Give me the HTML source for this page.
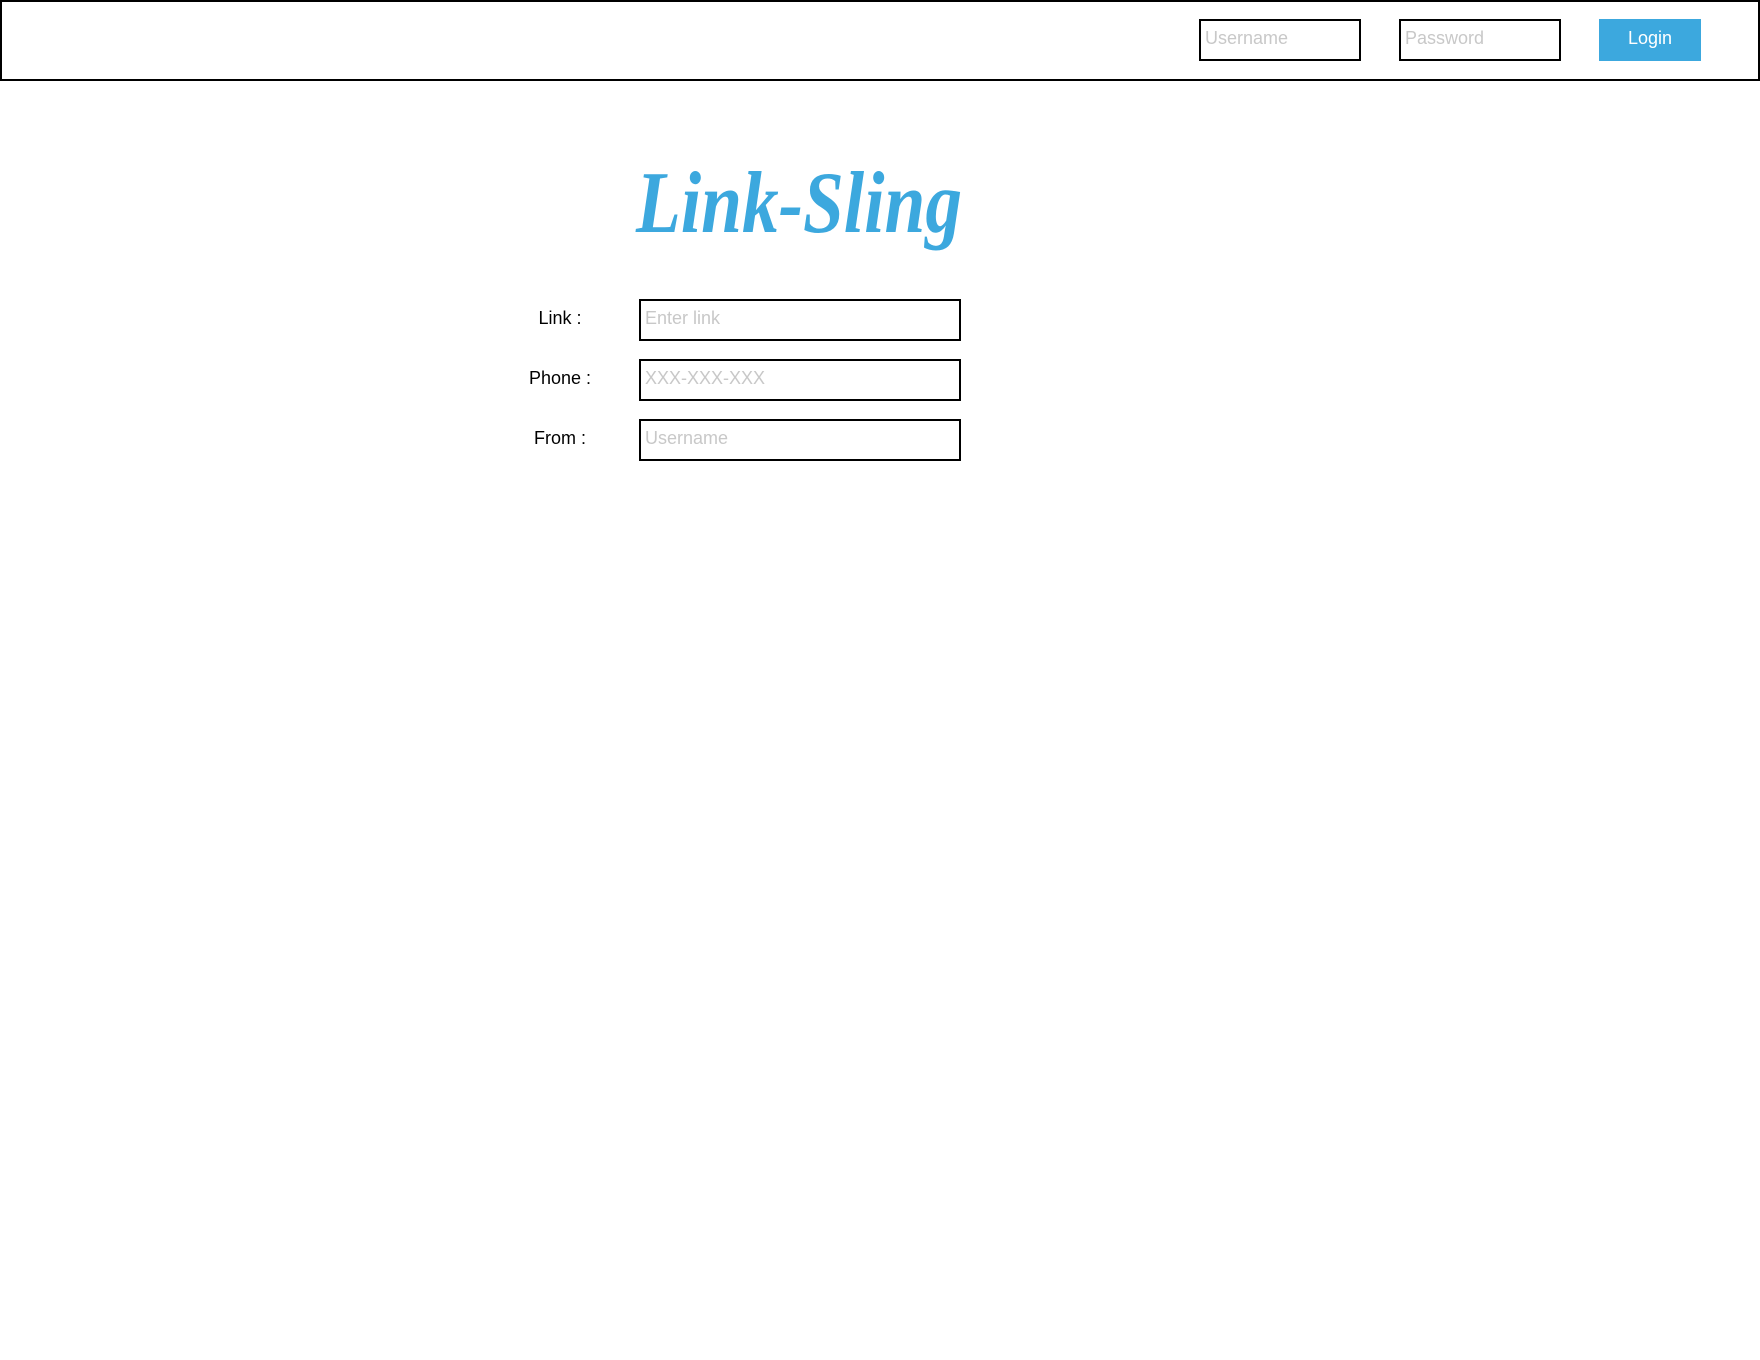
<!DOCTYPE html>
<html><head><meta charset="utf-8"><style>
*{box-sizing:border-box;margin:0;padding:0}
body{width:1760px;height:1360px;background:#fff;position:relative;font-family:"Liberation Sans",sans-serif;overflow:hidden}
.hdr{position:absolute;left:0;top:0;width:1760px;height:81px;border:2px solid #000}
.box{position:absolute;border:2px solid #000;background:#fff;color:#c8c8c8;font-size:18px;padding-left:4px;display:flex;align-items:center;padding-bottom:4px}
.btn{position:absolute;left:1599px;top:19px;width:102px;height:42px;background:#3ca8de;color:#fff;font-size:18px;display:flex;align-items:center;justify-content:center;padding-bottom:3px}
.lbl{position:absolute;width:120px;text-align:center;font-size:18px;color:#000}
</style></head><body>
<div class="hdr"></div>
<div class="box" style="left:1199px;top:19px;width:162px;height:42px">Username</div>
<div class="box" style="left:1399px;top:19px;width:162px;height:42px">Password</div>
<div class="btn">Login</div>
<svg style="position:absolute;left:630px;top:152px" width="350" height="110">
<text x="6" y="80" font-family="Liberation Serif" font-weight="bold" font-style="italic" font-size="88" fill="#3ca8de" textLength="326" lengthAdjust="spacingAndGlyphs">Link-Sling</text>
</svg>
<div class="lbl" style="left:500px;top:308px">Link :</div>
<div class="lbl" style="left:500px;top:368px">Phone :</div>
<div class="lbl" style="left:500px;top:428px">From :</div>
<div class="box" style="left:639px;top:299px;width:322px;height:42px">Enter link</div>
<div class="box" style="left:639px;top:359px;width:322px;height:42px">XXX-XXX-XXX</div>
<div class="box" style="left:639px;top:419px;width:322px;height:42px">Username</div>
</body></html>
